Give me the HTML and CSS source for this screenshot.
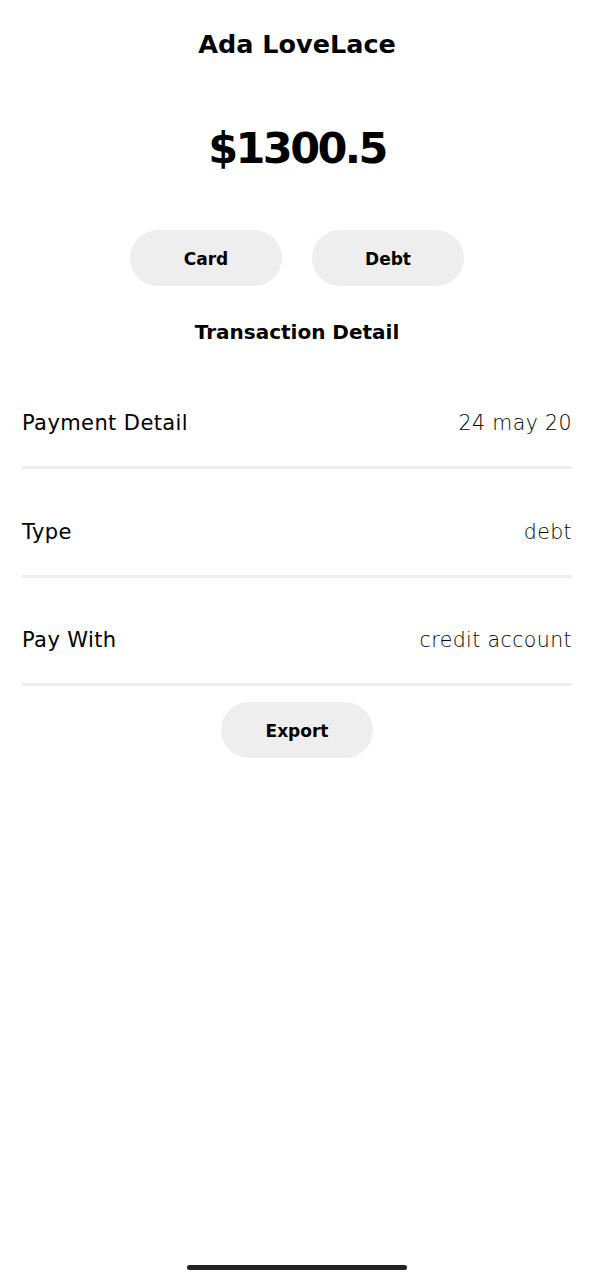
FILE: index.html
```html
<!DOCTYPE html>
<html lang="en">
<head>
<meta charset="utf-8">
<title>Transaction</title>
<link rel="stylesheet" href="styles.css">
</head>
<body>
<div class="screen">
  <h1 class="name">Ada LoveLace</h1>
  <div class="amount">$1300.5</div>
  <div class="tags">
    <div class="pill">Card</div>
    <div class="pill">Debt</div>
  </div>
  <h2 class="title">Transaction Detail</h2>
  <div class="details">
    <div class="row"><span class="label">Payment Detail</span><span class="value">24 may 20</span></div>
    <div class="row"><span class="label">Type</span><span class="value">debt</span></div>
    <div class="row"><span class="label">Pay With</span><span class="value">credit account</span></div>
  </div>
  <div class="actions">
    <div class="pill">Export</div>
  </div>
  <div class="home-indicator"></div>
</div>
</body>
</html>
```
FILE: styles.css
```css
* { box-sizing: border-box; }
html, body { margin: 0; padding: 0; background: #fff; }
body {
  font-family: "DejaVu Sans", "Noto Sans", sans-serif;
  color: #000;
}
.screen {
  min-height: 1280px;
  display: flex;
  flex-direction: column;
  padding: 0 23px 0 22px;
}
.name {
  margin: 28px 0 0;
  font-size: 25.5px;
  line-height: 32px;
  font-weight: 700;
  text-align: center;
}
.amount {
  margin-top: 58px;
  font-size: 43px;
  line-height: 60px;
  font-weight: 700;
  text-align: center;
  letter-spacing: -2.6px;
}
.tags {
  margin-top: 52px;
  display: flex;
  justify-content: center;
  gap: 30px;
}
.pill {
  width: 152px;
  height: 56px;
  border-radius: 28px;
  background: #eeeeee;
  display: flex;
  align-items: center;
  justify-content: center;
  font-size: 17px;
  font-weight: 700;
  padding-top: 2px;
}
.title {
  margin: 31px 0 0;
  font-size: 20px;
  line-height: 30px;
  font-weight: 700;
  text-align: center;
}
.details {
  margin-top: 14px;
  display: flex;
  flex-direction: column;
}
.row {
  display: flex;
  justify-content: space-between;
  align-items: center;
  padding: 48px 0 29px;
  border-bottom: 3px solid #eeeeee;
  font-size: 21px;
  line-height: 28px;
  letter-spacing: 0.4px;
}
.row + .row { padding-top: 48.5px; }
.value {
  font-weight: 200;
  font-size: 20.5px;
  color: #000;
}
.actions {
  margin-top: 16px;
  display: flex;
  justify-content: center;
}
.home-indicator {
  margin: auto auto 10px;
  width: 220px;
  height: 5px;
  border-radius: 3px;
  background: #222;
}
```
